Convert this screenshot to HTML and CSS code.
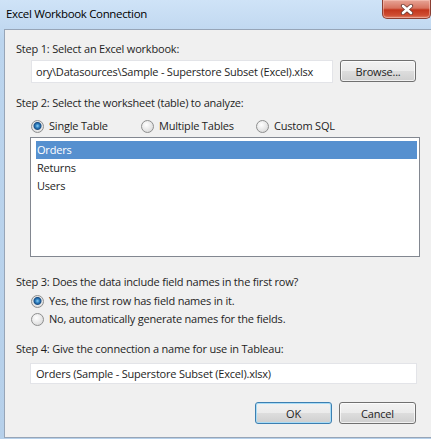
FILE: index.html
```html
<!DOCTYPE html>
<html lang="en">
<head>
  <meta charset="UTF-8">
  <title>Excel Workbook Connection</title>
  <link rel="stylesheet" href="styles.css">
</head>
<body>
  <div class="window">
    <div class="titlebar">
      <div class="title">Excel Workbook Connection</div>
      <button class="close-button">
        <svg width="16" height="11" viewBox="0 0 16 11">
          <path d="M4 2 L12 9 M12 2 L4 9" stroke="#6b3a33" stroke-width="4.2" stroke-linecap="round"/>
          <path d="M4 2 L12 9 M12 2 L4 9" stroke="#ffffff" stroke-width="2.6" stroke-linecap="round"/>
        </svg>
      </button>
    </div>

    <div class="panel">
      <div class="step-label">Step 1: Select an Excel workbook:</div>
      <div class="path-row">
        <input class="text-input path-input" type="text" readonly value="ory\Datasources\Sample - Superstore Subset (Excel).xlsx">
        <button class="button browse-button">Browse...</button>
      </div>

      <div class="step-label step-2">Step 2: Select the worksheet (table) to analyze:</div>
      <div class="radio-row">
        <label class="radio radio-single"><span class="radio-dot checked"></span>Single Table</label>
        <label class="radio radio-multi"><span class="radio-dot"></span>Multiple Tables</label>
        <label class="radio"><span class="radio-dot"></span>Custom SQL</label>
      </div>
      <div class="table-list">
        <div class="list-item selected">Orders</div>
        <div class="list-item">Returns</div>
        <div class="list-item">Users</div>
      </div>

      <div class="step-label step-3">Step 3: Does the data include field names in the first row?</div>
      <div class="radio-column">
        <label class="radio"><span class="radio-dot checked"></span>Yes, the first row has field names in it.</label>
        <label class="radio"><span class="radio-dot"></span>No, automatically generate names for the fields.</label>
      </div>

      <div class="step-label step-4">Step 4: Give the connection a name for use in Tableau:</div>
      <input class="text-input name-input" type="text" readonly value="Orders (Sample - Superstore Subset (Excel).xlsx)">

      <div class="button-row">
        <button class="button ok-button">OK</button>
        <button class="button">Cancel</button>
      </div>
    </div>
  </div>
</body>
</html>
```

FILE: styles.css
```css
body, html {
  margin: 0;
  padding: 0;
  height: 100%;
  font-family: 'Open Sans', 'Noto Sans', sans-serif;
  font-size: 11px;
  letter-spacing: -0.2px;
  color: #1e1e1e;
}
.window {
  width: 431px;
  height: 439px;
  display: flex;
  flex-direction: column;
  background: linear-gradient(to bottom, #cfe3f7, #bcd5ee 40px, #b6d0ea);
  overflow: hidden;
}
.titlebar {
  height: 29px;
  display: flex;
  justify-content: space-between;
  align-items: flex-start;
}
.title {
  padding: 6px 0 0 6px;
  font-size: 11.5px;
  letter-spacing: -0.35px;
  line-height: 16px;
  color: #000;
}
.close-button {
  width: 49px;
  height: 19px;
  margin: 0;
  padding: 0;
  border: 1px solid #8b3f33;
  border-top: none;
  border-radius: 0 0 5px 5px;
  background: linear-gradient(to bottom, #e7a597, #d7735f 45%, #c2351c 55%, #cf4d32 85%, #e0866e);
  box-shadow: inset 0 0 0 1px rgba(255, 210, 200, 0.45);
  display: flex;
  align-items: center;
  justify-content: center;
}
.close-button svg {
  display: block;
}
.panel {
  flex: 1;
  margin: 0 0 1px 4px;
  border: 1px solid #97a5b7;
  border-right: none;
  background-color: #f0f0f0;
  padding: 11px 15px 0 11px;
  display: flex;
  flex-direction: column;
}
.step-label {
  line-height: 16px;
}
.step-2 {
  margin-top: 12px;
}
.step-3 {
  margin-top: 17px;
}
.step-4 {
  margin-top: 13px;
}
.path-row {
  display: flex;
  align-items: flex-start;
  margin: 3px 0 0 15px;
}
.text-input {
  font-family: inherit;
  font-size: 11px;
  letter-spacing: -0.2px;
  color: #1e1e1e;
  background-color: white;
  border: 1px solid #e3e4e8;
  padding: 0 0 0 4px;
  margin: 0;
  outline: none;
  box-sizing: border-box;
}
.path-input {
  width: 302px;
  height: 23px;
}
.name-input {
  width: 387px;
  height: 21px;
  margin: 6px 0 0 14px;
  padding-left: 5px;
}
.button {
  font-family: inherit;
  font-size: 11px;
  letter-spacing: -0.2px;
  color: #1e1e1e;
  height: 22px;
  width: 77px;
  margin: 0;
  padding: 0;
  border: 1px solid #707070;
  border-radius: 3px;
  background: linear-gradient(to bottom, #f2f2f2, #ebebeb 49%, #dddddd 51%, #cfcfcf);
  box-shadow: inset 0 0 0 1px rgba(255, 255, 255, 0.7);
}
.browse-button {
  width: 76px;
  margin-left: 7px;
}
.radio-row {
  display: flex;
  margin: 7px 0 0 15px;
  height: 16px;
}
.radio {
  display: flex;
  align-items: center;
  line-height: 16px;
}
.radio-single {
  width: 110px;
}
.radio-multi {
  width: 115px;
}
.radio-dot {
  width: 11px;
  height: 11px;
  border: 1px solid #8e8f8f;
  border-radius: 50%;
  margin-right: 5px;
  background: radial-gradient(circle at 40% 35%, #ffffff, #e4e4e4 60%, #cfcfcf);
}
.radio-dot.checked {
  background: radial-gradient(circle at 50% 45%, #8fd0f5 0, #2d7fc0 2px, #1b4f85 3.5px, #e9e9e9 4.5px, #cfcfcf);
}
.table-list {
  margin: 3px 0 0 14px;
  width: 390px;
  height: 120px;
  box-sizing: border-box;
  border: 1px solid #828790;
  background-color: white;
  padding: 3px 2px 0 5px;
}
.list-item {
  height: 18px;
  line-height: 18px;
  padding-left: 1px;
}
.list-item.selected {
  background-color: #5690cf;
  color: white;
}
.radio-column {
  margin: 2px 0 0 15px;
}
.radio-column .radio {
  height: 18px;
}
.button-row {
  display: flex;
  justify-content: flex-end;
  gap: 7px;
  margin-top: 18px;
}
.ok-button {
  border-color: #3c7fb1;
  box-shadow: inset 0 0 0 1px #a9dcf6;
}
```
